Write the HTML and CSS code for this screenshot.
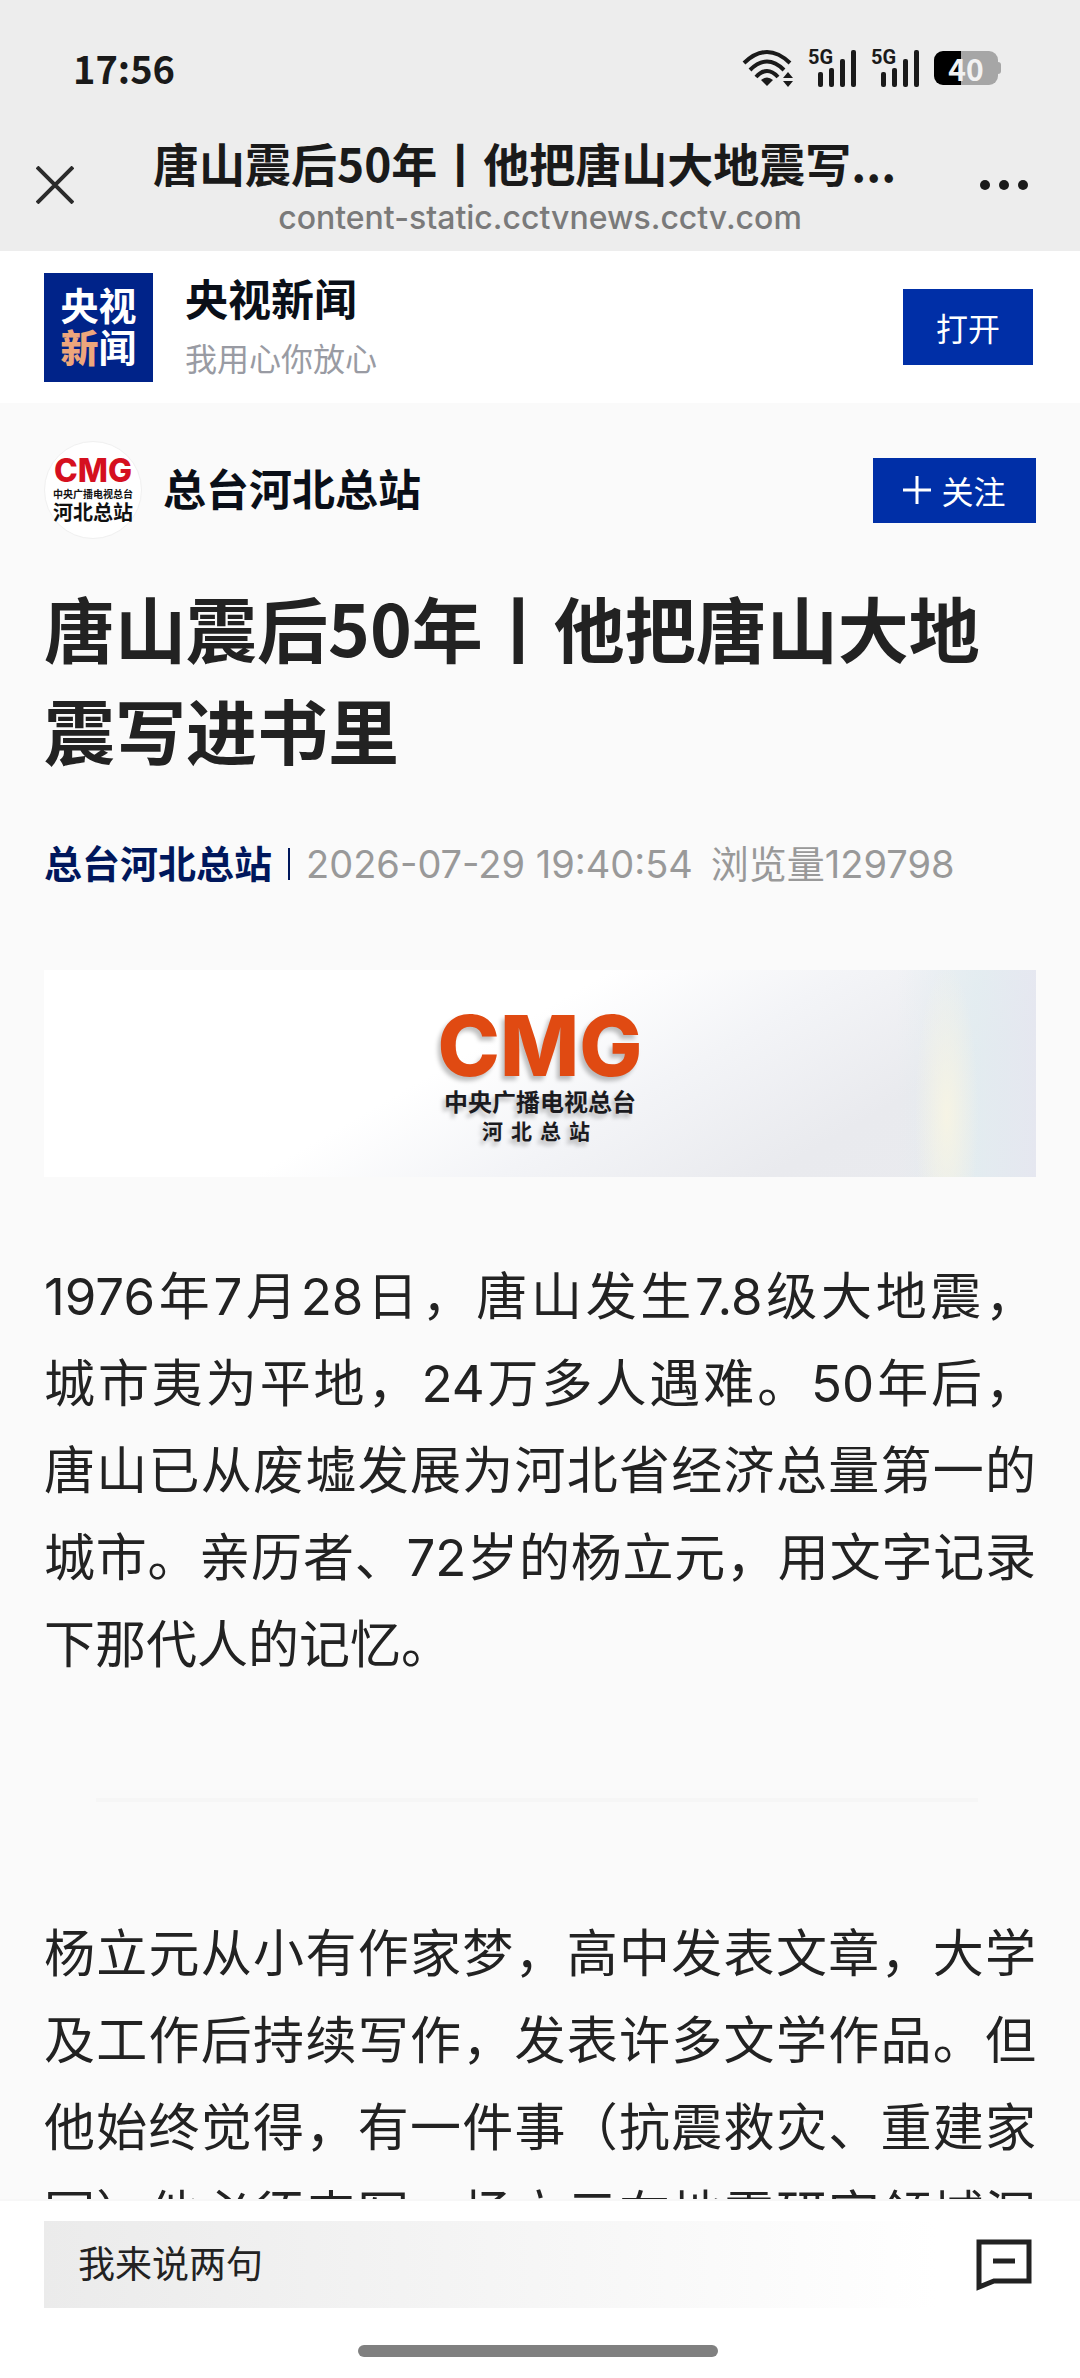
FILE: index.html
```html
<!DOCTYPE html>
<html lang="zh-CN">
<head>
    <meta charset="UTF-8">
    <meta name="viewport" content="width=device-width, initial-scale=1.0">
    <title>唐山震后50年丨他把唐山大地震写进书里</title>
    <link rel="stylesheet" href="styles.css">
</head>
<body>
    <header class="top">
        <div class="status">
            <span class="clock">17:56</span>
            <div class="status-icons">
                <svg class="wifi" width="52" height="38" viewBox="0 0 52 38" fill="none" stroke="#1a1a1a" stroke-width="4">
                    <path d="M2 14 Q25 -8 48 14"/>
                    <path d="M8 21 Q25 4 42 21"/>
                    <path d="M14 28 Q25 16 36 28"/>
                    <path d="M25 37 L19 31 Q25 26 31 31 Z" fill="#1a1a1a" stroke="none"/>
                    <path d="M41 29 L46 23 L51 29 Z M41 32 L46 38 L51 32 Z" fill="#1a1a1a" stroke="none"/>
                </svg>
                <div class="signal">
                    <span>5G</span>
                    <svg width="40" height="38" viewBox="0 0 40 38" fill="#1a1a1a">
                        <rect x="1" y="23" width="5" height="15" rx="2"/>
                        <rect x="12" y="19" width="5" height="19" rx="2"/>
                        <rect x="23" y="10" width="5" height="28" rx="2"/>
                        <rect x="34" y="1" width="5" height="37" rx="2"/>
                    </svg>
                </div>
                <div class="signal">
                    <span>5G</span>
                    <svg width="40" height="38" viewBox="0 0 40 38" fill="#1a1a1a">
                        <rect x="1" y="23" width="5" height="15" rx="2"/>
                        <rect x="12" y="19" width="5" height="19" rx="2"/>
                        <rect x="23" y="10" width="5" height="28" rx="2"/>
                        <rect x="34" y="1" width="5" height="37" rx="2"/>
                    </svg>
                </div>
                <div class="battery">40</div>
            </div>
        </div>
        <nav class="nav">
            <button class="icon-btn close" aria-label="关闭">
                <svg width="38" height="38" viewBox="0 0 38 38" stroke="#2b2b2b" stroke-width="4">
                    <path d="M1 1 L37 37 M37 1 L1 37"/>
                </svg>
            </button>
            <div class="nav-text">
                <div class="nav-title">唐山震后50年丨他把唐山大地震写...</div>
                <div class="nav-url">content-static.cctvnews.cctv.com</div>
            </div>
            <button class="icon-btn more" aria-label="更多">
                <svg width="48" height="10" viewBox="0 0 48 10" fill="#1a1a1a">
                    <circle cx="5" cy="5" r="5"/>
                    <circle cx="24" cy="5" r="5"/>
                    <circle cx="43" cy="5" r="5"/>
                </svg>
            </button>
        </nav>
    </header>

    <section class="app-bar">
        <div class="app-logo"><span>央视</span><span><b>新</b>闻</span></div>
        <div class="app-info">
            <div class="app-name">央视新闻</div>
            <div class="app-slogan">我用心你放心</div>
        </div>
        <button class="blue-btn open-btn">打开</button>
    </section>

    <main class="article">
        <div class="author">
            <div class="avatar">
                <span class="avatar-cmg">CMG</span>
                <span class="avatar-org">中央广播电视总台</span>
                <span class="avatar-station">河北总站</span>
            </div>
            <div class="author-name">总台河北总站</div>
            <button class="blue-btn follow-btn">
                <svg width="28" height="28" viewBox="0 0 28 28" stroke="#fff" stroke-width="3">
                    <path d="M14 0 V28 M0 14 H28"/>
                </svg>
                关注
            </button>
        </div>

        <h1>唐山震后50年丨他把唐山大地震写进书里</h1>

        <div class="meta">
            <a href="#" class="meta-author">总台河北总站</a>
            <time>2026-07-29 19:40:54</time>
            <span class="views">浏览量129798</span>
        </div>

        <div class="banner">
            <span class="banner-cmg">CMG</span>
            <span class="banner-org">中央广播电视总台</span>
            <span class="banner-station">河北总站</span>
        </div>

        <p>1976年7月28日，唐山发生7.8级大地震，<span class="word">城市</span>夷为平地，24万多人遇难。50年后，<span class="word">唐山</span>已从废墟发展为河北省经济总量第一的<span class="word">城市</span>。亲历者、72岁的杨立元，用文字记录下那代人的记忆。</p>
        <hr>
        <p class="cut">杨立元从小有作家梦，高中发表文章，大学及工作后持续写作，发表许多文学作品。但他始终觉得，有一件事（抗震救灾、重建家园）他必须来写。杨立元在地震研究领域深</p>
    </main>

    <footer class="bottom">
        <div class="comment-row">
            <input type="text" class="comment-input" placeholder="我来说两句" aria-label="我来说两句">
            <button class="icon-btn" aria-label="评论">
                <svg width="56" height="52" viewBox="0 0 56 52" fill="none" stroke="#222" stroke-width="5">
                    <path d="M3 3 H53 V42 H18 L3 48 Z"/>
                    <path d="M17 22 H39"/>
                </svg>
            </button>
        </div>
        <div class="home-bar"></div>
    </footer>
</body>
</html>
```
FILE: styles.css
```css
* {
    box-sizing: border-box;
}
body {
    margin: 0;
    height: 100vh;
    display: flex;
    flex-direction: column;
    background-color: #fafafa;
    color: #222;
    font-family: Inter, "Noto Sans CJK SC", sans-serif;
}
button {
    font-family: inherit;
    border: none;
    padding: 0;
    cursor: pointer;
}
svg {
    display: block;
}

/* status bar + browser title */
.top {
    background-color: #ededed;
    color: #1a1a1a;
    height: 251px;
    flex: none;
}
.status {
    display: flex;
    justify-content: space-between;
    align-items: center;
    padding: 44px 82px 0 73px;
}
.clock {
    font: bold 38px/48px "Noto Sans CJK SC", sans-serif;
}
.status-icons {
    display: flex;
    align-items: center;
    gap: 14px;
}
.signal {
    position: relative;
    padding-left: 9px;
}
.signal span {
    position: absolute;
    left: 0;
    top: -2px;
    font: bold 20px/20px Roboto, sans-serif;
}
.battery {
    position: relative;
    width: 64px;
    height: 34px;
    border-radius: 9px;
    background: linear-gradient(90deg, #000 42%, #a6a6a6 42%);
    color: #f2f2f2;
    font: bold 30px/34px "Noto Sans CJK SC", sans-serif;
    text-align: center;
}
.battery::after {
    content: "";
    position: absolute;
    right: -3px;
    top: 11px;
    width: 3px;
    height: 12px;
    border-radius: 0 3px 3px 0;
    background-color: #a6a6a6;
}
.nav {
    display: grid;
    grid-template-columns: 153px 1fr 153px;
    padding-top: 40px;
}
.icon-btn {
    background: none;
}
.close {
    justify-self: start;
    align-self: center;
    margin-left: 36px;
}
.more {
    justify-self: end;
    align-self: center;
    margin-right: 52px;
}
.nav-title {
    font: bold 46px/60px "Noto Sans CJK SC", sans-serif;
    white-space: nowrap;
}
.nav-url {
    margin-top: 6px;
    font-size: 32px;
    line-height: 40px;
    font-weight: 500;
    color: #7a7a7a;
    text-align: center;
}

/* app download bar */
.app-bar {
    display: flex;
    align-items: center;
    flex: none;
    height: 152px;
    padding: 0 47px 0 44px;
    background-color: #fff;
}
.app-logo {
    display: flex;
    flex-direction: column;
    align-items: center;
    justify-content: center;
    width: 109px;
    height: 109px;
    background-color: #002389;
    color: #fff;
    font-size: 38px;
    line-height: 42px;
    font-weight: bold;
}
.app-logo b {
    color: #eda67c;
}
.app-info {
    flex: 1;
    margin-left: 32px;
    padding-top: 6px;
}
.app-name {
    font-size: 43px;
    line-height: 60px;
    font-weight: bold;
    color: #0a0f18;
}
.app-slogan {
    font-size: 32px;
    line-height: 60px;
    color: #999ba3;
}
.blue-btn {
    background-color: #002fa7;
    color: #fff;
    font-size: 32px;
}
.open-btn {
    width: 130px;
    height: 76px;
}

/* article */
.article {
    flex: 1;
    min-height: 0;
    overflow-y: auto;
    scrollbar-width: none;
    padding: 38px 44px 0;
}
.author {
    display: flex;
    align-items: center;
}
.avatar {
    display: flex;
    flex-direction: column;
    align-items: center;
    justify-content: center;
    width: 98px;
    height: 98px;
    border-radius: 50%;
    border: 1px solid #f0f0f0;
    background-color: #fff;
    color: #111;
    white-space: nowrap;
}
.avatar-cmg {
    font-size: 32px;
    line-height: 32px;
    font-weight: 800;
    color: #d5101f;
}
.avatar-org {
    font-size: 10px;
    line-height: 14px;
    font-weight: bold;
}
.avatar-station {
    font-size: 20px;
    line-height: 24px;
    font-weight: bold;
}
.author-name {
    flex: 1;
    margin-left: 21px;
    font-size: 43px;
    line-height: 60px;
    font-weight: bold;
    color: #0a0f18;
}
.follow-btn {
    display: flex;
    align-items: center;
    justify-content: center;
    gap: 10px;
    width: 163px;
    height: 65px;
}
h1 {
    margin: 36px 0 0;
    font: bold 71px/102px "Noto Sans CJK SC", sans-serif;
}
.meta {
    display: flex;
    align-items: center;
    margin-top: 55px;
    font-size: 38px;
    line-height: 60px;
    color: #999;
    white-space: nowrap;
}
.meta-author {
    color: #00175c;
    font-weight: bold;
    text-decoration: none;
}
.meta time {
    position: relative;
    margin-left: 34px;
}
.meta time::before {
    content: "";
    position: absolute;
    left: -18px;
    top: 14px;
    width: 2px;
    height: 32px;
    background-color: #00175c;
}
.views {
    margin-left: 18px;
}
.banner {
    display: flex;
    flex-direction: column;
    align-items: center;
    margin-top: 76px;
    height: 207px;
    padding-top: 34px;
    background:
        radial-gradient(ellipse 32px 150px at 91% 70%, rgba(250, 246, 226, 0.8), transparent),
        linear-gradient(90deg, transparent 86%, rgba(225, 236, 240, 0.8) 94%, rgba(228, 230, 240, 0.8) 100%),
        linear-gradient(150deg, #fff 42%, #f3f4f7 60%, #e9eaee 80%, #eaebef 100%);
    color: #1b1b1f;
    text-shadow: -3px 4px 4px rgba(0, 0, 0, 0.25);
}
.banner-cmg {
    font-size: 84px;
    line-height: 84px;
    font-weight: 800;
    color: #e04a12;
}
.banner-org {
    font-size: 24px;
    line-height: 30px;
    font-weight: bold;
}
.banner-station {
    font-size: 21px;
    line-height: 28px;
    font-weight: bold;
    letter-spacing: 8px;
}
p {
    margin: 76px 0 0;
    font-size: 51px;
    line-height: 87px;
    text-align: justify;
    text-spacing-trim: space-all;
}
.word {
    white-space: nowrap;
}
hr {
    height: 4px;
    margin: 110px 58px 0 52px;
    border: none;
    background-color: #f6f6f6;
}
.cut {
    margin-top: 108px;
    text-align-last: justify;
}

/* comment bar */
.bottom {
    flex: none;
    border-top: 2px solid #f7f7f7;
    background-color: #fff;
    padding: 20px 48px 21px 44px;
}
.comment-row {
    display: flex;
    align-items: center;
    justify-content: space-between;
}
.comment-input {
    flex: 1;
    height: 87px;
    margin-right: 40px;
    padding: 0 34px;
    border: none;
    outline: none;
    background: linear-gradient(90deg, #ebebeb, #fff);
    font-family: inherit;
    font-size: 37px;
}
.comment-input::placeholder {
    color: #222;
    opacity: 1;
}
.home-bar {
    width: 360px;
    height: 12px;
    margin: 37px auto 0;
    border-radius: 6px;
    background-color: #808080;
}
```
